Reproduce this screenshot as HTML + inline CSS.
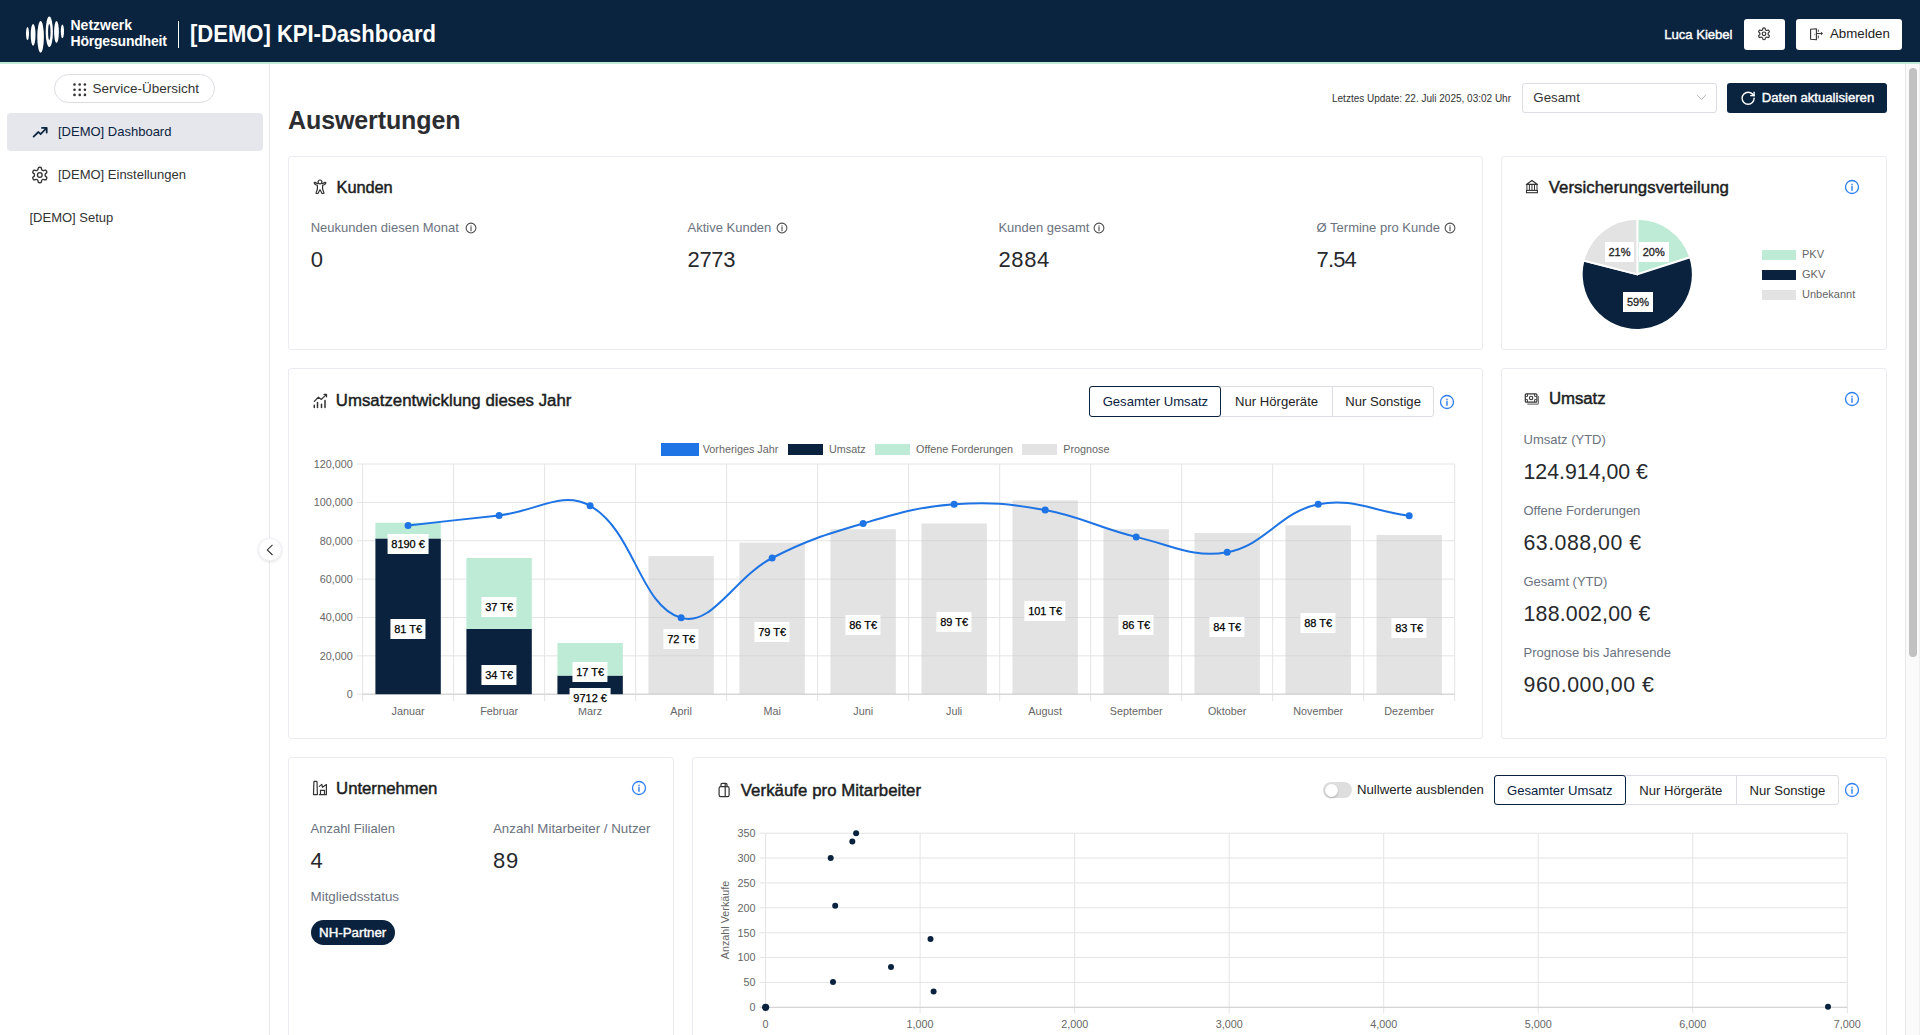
<!DOCTYPE html><html><head><meta charset="utf-8"><title>KPI-Dashboard</title>
<style>
html,body{margin:0;padding:0;width:1920px;height:1035px;overflow:hidden;background:#fff;font-family:"Liberation Sans", sans-serif;}
.t{position:absolute;white-space:nowrap;}
.card{position:absolute;border:1px solid #ebebf2;border-radius:3px;background:#fff;box-sizing:border-box;}
</style></head><body>

<div style="position:absolute;left:0px;top:0px;width:1920px;height:62px;background:#0a233e;"></div>
<div style="position:absolute;left:0px;top:62px;width:1920px;height:2px;background:#bfead6;"></div>
<svg style="position:absolute;left:0px;top:0px;overflow:visible;" width="80" height="62" viewBox="0 0 80 62"><ellipse cx="27.5" cy="33.6" rx="1.5" ry="6.5" fill="#fff"/><ellipse cx="33.1" cy="34.8" rx="2.4" ry="10.9" fill="#fff"/><ellipse cx="40.6" cy="36.9" rx="3.3" ry="15.8" fill="#fff"/><ellipse cx="49.3" cy="31.8" rx="3.6" ry="15.3" fill="#fff"/><ellipse cx="56.5" cy="32" rx="2.4" ry="10.9" fill="#fff"/><ellipse cx="62.4" cy="31.3" rx="1.6" ry="6.9" fill="#fff"/><ellipse cx="49.3" cy="32" rx="1.2" ry="8" fill="#0a233e"/></svg>
<div class="t " style="left:70.5px;top:16.98px;font-size:14px;line-height:16.8px;color:#fff;font-weight:bold;letter-spacing:0px;">Netzwerk</div>
<div class="t " style="left:70.5px;top:33.19px;font-size:14px;line-height:16.8px;color:#fff;font-weight:bold;letter-spacing:-0.2px;">Hörgesundheit</div>
<div style="position:absolute;left:178px;top:21px;width:1px;height:27px;background:#fff;"></div>
<div class="t " style="left:189.8px;transform: scaleX(0.918);transform-origin:0 0;top:19.66px;font-size:24px;line-height:28.8px;color:#fff;font-weight:bold;">[DEMO] KPI-Dashboard</div>
<div class="t " style="right:187.5px;top:26.94px;font-size:13.2px;line-height:15.84px;color:#fff;font-weight:normal;letter-spacing:-0.05px;-webkit-text-stroke:0.4px #fff;">Luca Kiebel</div>
<div style="position:absolute;left:1744px;top:19px;width:41px;height:31px;background:#fff;border-radius:3px;"></div>
<svg style="position:absolute;left:0;top:0;overflow:visible" width="1" height="1"><g transform="translate(1756.90 26.70) scale(0.5917)" fill="none" stroke="#333" stroke-width="2.0" stroke-linecap="round" stroke-linejoin="round"><path d="M12.22 2h-.44a2 2 0 0 0-2 2v.18a2 2 0 0 1-1 1.73l-.43.25a2 2 0 0 1-2 0l-.15-.08a2 2 0 0 0-2.73.73l-.22.38a2 2 0 0 0 .73 2.73l.15.1a2 2 0 0 1 1 1.72v.51a2 2 0 0 1-1 1.74l-.15.09a2 2 0 0 0-.73 2.73l.22.38a2 2 0 0 0 2.73.73l.15-.08a2 2 0 0 1 2 0l.43.25a2 2 0 0 1 1 1.73V20a2 2 0 0 0 2 2h.44a2 2 0 0 0 2-2v-.18a2 2 0 0 1 1-1.73l.43-.25a2 2 0 0 1 2 0l.15.08a2 2 0 0 0 2.73-.73l.22-.39a2 2 0 0 0-.73-2.73l-.15-.08a2 2 0 0 1-1-1.74v-.5a2 2 0 0 1 1-1.74l.15-.09a2 2 0 0 0 .73-2.73l-.22-.38a2 2 0 0 0-2.73-.73l-.15.08a2 2 0 0 1-2 0l-.43-.25a2 2 0 0 1-1-1.73V4a2 2 0 0 0-2-2z"/><circle cx="12" cy="12" r="3"/></g></svg>
<div style="position:absolute;left:1796px;top:19px;width:106px;height:31px;background:#fff;border-radius:3px;"></div>
<svg style="position:absolute;left:1800px;top:20px;overflow:visible;" width="30" height="30" viewBox="0 0 30 30"><path d="M10.6 9.3 L16.4 8.7 V19.7 L10.6 19.3 Z" fill="none" stroke="#333" stroke-width="1.1" stroke-linejoin="round"/><path d="M16.6 13.5 H21.5" stroke="#333" stroke-width="1.1"/><path d="M21 11.8 L23 13.5 L21 15.2 Z" fill="#333"/><path d="M18.3 9.6 V11.8 M18.3 15.4 V18.4" stroke="#333" stroke-width="0.9"/><circle cx="14.8" cy="14.2" r="0.5" fill="#333"/></svg>
<div class="t " style="left:1830px;top:26.39px;font-size:13.3px;line-height:15.96px;color:#222;font-weight:normal;">Abmelden</div>
<div style="position:absolute;left:269px;top:64px;width:1px;height:971px;background:#e8e8f0;"></div>
<div style="position:absolute;left:54px;top:74px;width:161px;height:29px;border:1px solid #dcdce4;border-radius:15px;box-sizing:border-box;"></div>
<svg style="position:absolute;left:73px;top:83px;overflow:visible;" width="13" height="13" viewBox="0 0 13 13"><circle cx="1.5" cy="1.5" r="1.3" fill="#333"/><circle cx="1.5" cy="6.7" r="1.3" fill="#333"/><circle cx="1.5" cy="11.9" r="1.3" fill="#333"/><circle cx="6.7" cy="1.5" r="1.3" fill="#333"/><circle cx="6.7" cy="6.7" r="1.3" fill="#333"/><circle cx="6.7" cy="11.9" r="1.3" fill="#333"/><circle cx="11.9" cy="1.5" r="1.3" fill="#333"/><circle cx="11.9" cy="6.7" r="1.3" fill="#333"/><circle cx="11.9" cy="11.9" r="1.3" fill="#333"/></svg>
<div class="t " style="left:92.5px;top:80.77px;font-size:13.5px;line-height:16.2px;color:#333;font-weight:normal;">Service-Übersicht</div>
<div style="position:absolute;left:7px;top:113px;width:256px;height:38px;background:#e6e7ec;border-radius:4px;"></div>
<svg style="position:absolute;left:26px;top:120px;overflow:visible;" width="28" height="22" viewBox="0 0 28 22"><path d="M7.6 16.6 L12.4 12 L14.6 14.2 L20.6 8 M16 7.9 H20.7 V12.6" fill="none" stroke="#0a233e" stroke-width="1.75" stroke-linecap="round" stroke-linejoin="round"/></svg>
<div class="t " style="left:58px;top:124.06px;font-size:13px;line-height:15.6px;color:#0a233e;font-weight:normal;">[DEMO] Dashboard</div>
<svg style="position:absolute;left:0;top:0;overflow:visible" width="1" height="1"><g transform="translate(30.45 165.65) scale(0.7792)" fill="none" stroke="#333" stroke-width="1.75" stroke-linecap="round" stroke-linejoin="round"><path d="M12.22 2h-.44a2 2 0 0 0-2 2v.18a2 2 0 0 1-1 1.73l-.43.25a2 2 0 0 1-2 0l-.15-.08a2 2 0 0 0-2.73.73l-.22.38a2 2 0 0 0 .73 2.73l.15.1a2 2 0 0 1 1 1.72v.51a2 2 0 0 1-1 1.74l-.15.09a2 2 0 0 0-.73 2.73l.22.38a2 2 0 0 0 2.73.73l.15-.08a2 2 0 0 1 2 0l.43.25a2 2 0 0 1 1 1.73V20a2 2 0 0 0 2 2h.44a2 2 0 0 0 2-2v-.18a2 2 0 0 1 1-1.73l.43-.25a2 2 0 0 1 2 0l.15.08a2 2 0 0 0 2.73-.73l.22-.39a2 2 0 0 0-.73-2.73l-.15-.08a2 2 0 0 1-1-1.74v-.5a2 2 0 0 1 1-1.74l.15-.09a2 2 0 0 0 .73-2.73l-.22-.38a2 2 0 0 0-2.73-.73l-.15.08a2 2 0 0 1-2 0l-.43-.25a2 2 0 0 1-1-1.73V4a2 2 0 0 0-2-2z"/><circle cx="12" cy="12" r="3"/></g></svg>
<div class="t " style="left:58px;top:167.06px;font-size:13px;line-height:15.6px;color:#333;font-weight:normal;">[DEMO] Einstellungen</div>
<div class="t " style="left:29.5px;top:210.06px;font-size:13px;line-height:15.6px;color:#333;font-weight:normal;">[DEMO] Setup</div>
<div style="position:absolute;left:258.3px;top:537.6px;width:23.5px;height:23.5px;background:#fff;border-radius:50%;box-shadow:0 1px 3px rgba(0,0,0,0.10);border:1px solid #efeff5;box-sizing:border-box;"></div>
<svg style="position:absolute;left:260px;top:540px;overflow:visible;" width="20" height="20" viewBox="0 0 20 20"><path d="M12.5 4.9 L7.3 9.9 L12.5 15" fill="none" stroke="#333" stroke-width="1.1"/></svg>
<div style="position:absolute;left:1905px;top:64px;width:15px;height:971px;background:#fafafa;border-left:1px solid #e8e8e8;border-right:1px solid #f0f0f0;box-sizing:border-box;"></div>
<div style="position:absolute;left:1909px;top:68px;width:8px;height:589px;background:#c1c1c1;border-radius:4px;"></div>
<div class="t " style="left:288px;top:105.19px;font-size:25px;line-height:30.0px;color:#2b2d31;font-weight:bold;letter-spacing:-0.1px;">Auswertungen</div>
<div class="t " style="right:409px;top:92.78px;font-size:10px;line-height:12.0px;color:#333;font-weight:normal;">Letztes Update: 22. Juli 2025, 03:02 Uhr</div>
<div style="position:absolute;left:1522px;top:83px;width:195px;height:30px;border:1px solid #dcdce4;border-radius:3px;box-sizing:border-box;background:#fff;"></div>
<div class="t " style="left:1533.3px;top:89.89px;font-size:13.3px;line-height:15.96px;color:#333;font-weight:normal;">Gesamt</div>
<svg style="position:absolute;left:1690px;top:85px;overflow:visible;" width="24" height="20" viewBox="0 0 24 20"><path d="M7.1 10 L11.5 14.6 L15.8 10" fill="none" stroke="#b8b8be" stroke-width="1"/></svg>
<div style="position:absolute;left:1727px;top:83px;width:160px;height:30px;background:#0a233e;border-radius:3px;"></div>
<svg style="position:absolute;left:0;top:0;overflow:visible" width="1" height="1"><g transform="translate(1740.10 90.30) scale(0.6667)" fill="none" stroke="#fff" stroke-width="2.1" stroke-linecap="round" stroke-linejoin="round"><path d="M21 12a9 9 0 1 1-9-9c2.52 0 4.93 1 6.74 2.74L21 8"/><path d="M21 3v5h-5"/></g></svg>
<div class="t " style="left:1761.7px;top:89.94px;font-size:13.2px;line-height:15.84px;color:#fff;font-weight:normal;letter-spacing:-0.02px;-webkit-text-stroke:0.4px #fff;">Daten aktualisieren</div>
<div class="card" style="left:288px;top:156px;width:1195px;height:194px;"></div>
<svg style="position:absolute;left:308px;top:176px;overflow:visible;" width="24" height="24" viewBox="0 0 24 24"><circle cx="12" cy="5.9" r="1.9" fill="none" stroke="#333" stroke-width="1.2"/><path d="M10 7.9 L7 6.4 Q6.1 6.1 6.2 7.1 Q6.4 8.2 9.4 9.5 V13 L8.1 16.9 Q7.9 17.5 8.6 17.5 H9.5 Q10 17.5 10.2 17 L12 13.7 L13.8 17 Q14 17.5 14.5 17.5 H15.4 Q16.1 17.5 15.9 16.9 L14.6 13 V9.5 Q17.6 8.2 17.8 7.1 Q17.9 6.1 17 6.4 L14 7.9" fill="none" stroke="#333" stroke-width="1.2" stroke-linejoin="round"/></svg>
<div class="t " style="left:336.6px;top:177.61px;font-size:16.4px;line-height:19.68px;color:#1b1d21;font-weight:normal;letter-spacing:-0.1px;-webkit-text-stroke:0.45px #1b1d21;">Kunden</div>
<div class="t " style="left:310.7px;top:220.06px;font-size:13px;line-height:15.6px;color:#6b7280;font-weight:normal;">Neukunden diesen Monat</div>
<svg style="position:absolute;left:465.2px;top:221.5px;overflow:visible;" width="12" height="12" viewBox="0 0 12 12"><circle cx="6" cy="6" r="4.9" fill="none" stroke="#4a4a4a" stroke-width="1.05"/><circle cx="6" cy="3.9" r="0.65" fill="#4a4a4a"/><path d="M6 5.4 V8.7" stroke="#4a4a4a" stroke-width="1.1" stroke-linecap="round"/></svg>
<div class="t " style="left:310.7px;top:246.91px;font-size:22px;line-height:26.4px;color:#27292d;font-weight:normal;letter-spacing:0px;">0</div>
<div class="t " style="left:687.5px;top:220.06px;font-size:13px;line-height:15.6px;color:#6b7280;font-weight:normal;">Aktive Kunden</div>
<svg style="position:absolute;left:775.5px;top:221.5px;overflow:visible;" width="12" height="12" viewBox="0 0 12 12"><circle cx="6" cy="6" r="4.9" fill="none" stroke="#4a4a4a" stroke-width="1.05"/><circle cx="6" cy="3.9" r="0.65" fill="#4a4a4a"/><path d="M6 5.4 V8.7" stroke="#4a4a4a" stroke-width="1.1" stroke-linecap="round"/></svg>
<div class="t " style="left:687.5px;top:246.91px;font-size:22px;line-height:26.4px;color:#27292d;font-weight:normal;letter-spacing:-0.35px;">2773</div>
<div class="t " style="left:998.4px;top:220.06px;font-size:13px;line-height:15.6px;color:#6b7280;font-weight:normal;">Kunden gesamt</div>
<svg style="position:absolute;left:1093px;top:221.5px;overflow:visible;" width="12" height="12" viewBox="0 0 12 12"><circle cx="6" cy="6" r="4.9" fill="none" stroke="#4a4a4a" stroke-width="1.05"/><circle cx="6" cy="3.9" r="0.65" fill="#4a4a4a"/><path d="M6 5.4 V8.7" stroke="#4a4a4a" stroke-width="1.1" stroke-linecap="round"/></svg>
<div class="t " style="left:998.4px;top:246.91px;font-size:22px;line-height:26.4px;color:#27292d;font-weight:normal;letter-spacing:0.65px;">2884</div>
<div class="t " style="left:1316.6px;top:220.06px;font-size:13px;line-height:15.6px;color:#6b7280;font-weight:normal;">Ø Termine pro Kunde</div>
<svg style="position:absolute;left:1444px;top:221.5px;overflow:visible;" width="12" height="12" viewBox="0 0 12 12"><circle cx="6" cy="6" r="4.9" fill="none" stroke="#4a4a4a" stroke-width="1.05"/><circle cx="6" cy="3.9" r="0.65" fill="#4a4a4a"/><path d="M6 5.4 V8.7" stroke="#4a4a4a" stroke-width="1.1" stroke-linecap="round"/></svg>
<div class="t " style="left:1316.6px;top:246.91px;font-size:22px;line-height:26.4px;color:#27292d;font-weight:normal;letter-spacing:-0.9px;">7.54</div>
<div class="card" style="left:1501px;top:156px;width:386px;height:194px;"></div>
<svg style="position:absolute;left:1518px;top:176px;overflow:visible;" width="24" height="24" viewBox="0 0 24 24"><path d="M8.4 8.4 L13.95 4.4 L19.5 8.4 Z" fill="none" stroke="#333" stroke-width="1.2" stroke-linejoin="round"/><path d="M8.9 8.4 V14.3 M11.4 8.4 V14.3 M13.95 8.4 V14.3 M16.5 8.4 V14.3 M19 8.4 V14.3" stroke="#333" stroke-width="1"/><rect x="8.5" y="14.4" width="10.9" height="2.3" fill="none" stroke="#333" stroke-width="1.1"/></svg>
<div class="t " style="left:1548.7px;top:177.68px;font-size:16.8px;line-height:20.16px;color:#1b1d21;font-weight:normal;letter-spacing:0.05px;-webkit-text-stroke:0.45px #1b1d21;">Versicherungsverteilung</div>
<svg style="position:absolute;left:1843.7px;top:179px;overflow:visible;" width="16" height="16" viewBox="0 0 16 16"><circle cx="8" cy="8" r="6.5" fill="none" stroke="#2f7ff0" stroke-width="1.3"/><path d="M8 5.2 V5.7 M8 7.4 V11.3" stroke="#2f7ff0" stroke-width="1.4" stroke-linecap="round"/></svg>
<svg style="position:absolute;left:1500px;top:200px;overflow:visible;" width="300" height="150" viewBox="0 0 300 150"><path d="M137.29999999999995 74.39999999999998 L137.30 18.80 A55.6 55.6 0 0 1 190.18 57.22 Z" fill="#bdebd6" stroke="#fff" stroke-width="2" stroke-linejoin="round"/><path d="M137.29999999999995 74.39999999999998 L190.18 57.22 A55.6 55.6 0 1 1 83.45 60.57 Z" fill="#0a223e" stroke="#fff" stroke-width="2" stroke-linejoin="round"/><path d="M137.29999999999995 74.39999999999998 L83.45 60.57 A55.6 55.6 0 0 1 137.30 18.80 Z" fill="#e3e3e3" stroke="#fff" stroke-width="2" stroke-linejoin="round"/></svg>
<div style="position:absolute;left:1605px;top:242.3px;width:29px;height:19.7px;background:#fff;"></div>
<div class="t " style="left:1619.5px;transform:translateX(-50%);transform-origin:50% 0;top:246.15px;font-size:11px;line-height:13.2px;color:#222;font-weight:normal;-webkit-text-stroke:0.3px #222;">21%</div>
<div style="position:absolute;left:1639px;top:242.3px;width:29.5px;height:19.7px;background:#fff;"></div>
<div class="t " style="left:1653.75px;transform:translateX(-50%);transform-origin:50% 0;top:246.15px;font-size:11px;line-height:13.2px;color:#222;font-weight:normal;-webkit-text-stroke:0.3px #222;">20%</div>
<div style="position:absolute;left:1623px;top:291.8px;width:30px;height:19.9px;background:#fff;"></div>
<div class="t " style="left:1638.0px;transform:translateX(-50%);transform-origin:50% 0;top:295.75px;font-size:11px;line-height:13.2px;color:#222;font-weight:normal;-webkit-text-stroke:0.3px #222;">59%</div>
<div style="position:absolute;left:1761.5px;top:249.7px;width:34px;height:10px;background:#bdebd6;"></div>
<div class="t " style="left:1802px;top:248.40px;font-size:11px;line-height:13.2px;color:#666;font-weight:normal;">PKV</div>
<div style="position:absolute;left:1761.5px;top:269.59999999999997px;width:34px;height:10px;background:#0a223e;"></div>
<div class="t " style="left:1802px;top:268.30px;font-size:11px;line-height:13.2px;color:#666;font-weight:normal;">GKV</div>
<div style="position:absolute;left:1761.5px;top:289.5px;width:34px;height:10px;background:#e3e3e3;"></div>
<div class="t " style="left:1802px;top:288.20px;font-size:11px;line-height:13.2px;color:#666;font-weight:normal;">Unbekannt</div>
<div class="card" style="left:1501px;top:368px;width:386px;height:371px;"></div>
<svg style="position:absolute;left:1518px;top:388px;overflow:visible;" width="24" height="24" viewBox="0 0 24 24"><rect x="7.3" y="5.8" width="11.6" height="8.4" rx="1" fill="none" stroke="#333" stroke-width="1.2"/><circle cx="13.1" cy="10" r="1.7" fill="none" stroke="#333" stroke-width="1.1"/><path d="M7.6 8.4 H9.5 V6 M16.6 6 V8.4 H18.6 M7.6 11.6 H9.5 V14 M16.6 14 V11.6 H18.6" fill="none" stroke="#333" stroke-width="0.9"/><path d="M20.4 8 V15.3 A0.8 0.8 0 0 1 19.6 16.1 H9.3" fill="none" stroke="#777" stroke-width="1.2"/></svg>
<div class="t " style="left:1549px;top:389.38px;font-size:16.8px;line-height:20.16px;color:#1b1d21;font-weight:normal;letter-spacing:-0.05px;-webkit-text-stroke:0.45px #1b1d21;">Umsatz</div>
<svg style="position:absolute;left:1843.9px;top:391px;overflow:visible;" width="16" height="16" viewBox="0 0 16 16"><circle cx="8" cy="8" r="6.5" fill="none" stroke="#2f7ff0" stroke-width="1.3"/><path d="M8 5.2 V5.7 M8 7.4 V11.3" stroke="#2f7ff0" stroke-width="1.4" stroke-linecap="round"/></svg>
<div class="t " style="left:1523.5px;top:432.06px;font-size:13px;line-height:15.6px;color:#6b7280;font-weight:normal;">Umsatz (YTD)</div>
<div class="t " style="left:1523.5px;top:459.61px;font-size:21.3px;line-height:25.56px;color:#27292d;font-weight:normal;letter-spacing:0px;">124.914,00 €</div>
<div class="t " style="left:1523.5px;top:503.16px;font-size:13px;line-height:15.6px;color:#6b7280;font-weight:normal;">Offene Forderungen</div>
<div class="t " style="left:1523.5px;top:530.71px;font-size:21.3px;line-height:25.56px;color:#27292d;font-weight:normal;letter-spacing:0.5px;">63.088,00 €</div>
<div class="t " style="left:1523.5px;top:574.26px;font-size:13px;line-height:15.6px;color:#6b7280;font-weight:normal;">Gesamt (YTD)</div>
<div class="t " style="left:1523.5px;top:601.81px;font-size:21.3px;line-height:25.56px;color:#27292d;font-weight:normal;letter-spacing:0.22px;">188.002,00 €</div>
<div class="t " style="left:1523.5px;top:645.36px;font-size:13px;line-height:15.6px;color:#6b7280;font-weight:normal;">Prognose bis Jahresende</div>
<div class="t " style="left:1523.5px;top:672.91px;font-size:21.3px;line-height:25.56px;color:#27292d;font-weight:normal;letter-spacing:0.55px;">960.000,00 €</div>
<div class="card" style="left:288px;top:757px;width:386px;height:300px;"></div>
<svg style="position:absolute;left:308px;top:776px;overflow:visible;" width="24" height="24" viewBox="0 0 24 24"><path d="M5.5 18.6 L5.9 6 Q5.9 5.3 6.6 5.3 H8.3 Q9 5.3 9 6 L9.4 18.6 Z" fill="none" stroke="#333" stroke-width="1.2" stroke-linejoin="round"/><path d="M11.3 10.4 L13.8 8.4 L14.5 11.3 L18.4 8.6 V18.6 H11.3" fill="none" stroke="#333" stroke-width="1.2" stroke-linejoin="round" stroke-linecap="round"/><path d="M12.5 18.6 V14.4 H16.5 V18.6" fill="none" stroke="#333" stroke-width="1.2"/></svg>
<div class="t " style="left:336.1px;top:778.88px;font-size:16.8px;line-height:20.16px;color:#1b1d21;font-weight:normal;letter-spacing:-0.05px;-webkit-text-stroke:0.45px #1b1d21;">Unternehmen</div>
<svg style="position:absolute;left:631px;top:780.4px;overflow:visible;" width="16" height="16" viewBox="0 0 16 16"><circle cx="8" cy="8" r="6.5" fill="none" stroke="#2f7ff0" stroke-width="1.3"/><path d="M8 5.2 V5.7 M8 7.4 V11.3" stroke="#2f7ff0" stroke-width="1.4" stroke-linecap="round"/></svg>
<div class="t " style="left:310.5px;top:820.86px;font-size:13px;line-height:15.6px;color:#6b7280;font-weight:normal;">Anzahl Filialen</div>
<div class="t " style="left:493px;top:820.69px;font-size:13.3px;line-height:15.96px;color:#6b7280;font-weight:normal;">Anzahl Mitarbeiter / Nutzer</div>
<div class="t " style="left:310.5px;top:847.90px;font-size:22px;line-height:26.4px;color:#27292d;font-weight:normal;">4</div>
<div class="t " style="left:493px;top:847.90px;font-size:22px;line-height:26.4px;color:#27292d;font-weight:normal;letter-spacing:0.8px;">89</div>
<div class="t " style="left:310.5px;top:888.83px;font-size:13.4px;line-height:16.08px;color:#6b7280;font-weight:normal;">Mitgliedsstatus</div>
<div style="position:absolute;left:311px;top:920px;width:84px;height:25px;background:#0a223e;border-radius:13px;"></div>
<div class="t " style="left:352.7px;transform:translateX(-50%);transform-origin:50% 0;top:924.89px;font-size:13.3px;line-height:15.96px;color:#fff;font-weight:normal;-webkit-text-stroke:0.4px #fff;">NH-Partner</div>
<div class="card" style="left:288px;top:368px;width:1195px;height:371px;"></div>
<svg style="position:absolute;left:308px;top:388px;overflow:visible;" width="24" height="24" viewBox="0 0 24 24"><path d="M6.3 17.2 V19.4 M9.5 14.5 V19.4 M13.5 16.2 V19.4 M17 12.5 V19.4" stroke="#333" stroke-width="1.5" stroke-linecap="round"/><path d="M6.3 13.4 L10.4 9.2 L13.4 11.4 L18.2 6.6 M16 6.3 H18.5 V8.8" fill="none" stroke="#333" stroke-width="1.3" stroke-linecap="round" stroke-linejoin="round"/></svg>
<div class="t " style="left:335.8px;top:391.38px;font-size:16.8px;line-height:20.16px;color:#1b1d21;font-weight:normal;letter-spacing:0.02px;-webkit-text-stroke:0.45px #1b1d21;">Umsatzentwicklung dieses Jahr</div>
<div style="position:absolute;left:1089.3px;top:386.4px;width:345.20000000000005px;height:30.200000000000045px;border:1px solid #dcdce4;border-radius:3px;box-sizing:border-box;"></div>
<div style="position:absolute;left:1089.3px;top:386.4px;width:132.20000000000005px;height:30.200000000000045px;border:1.5px solid #0a223e;border-radius:3px;box-sizing:border-box;"></div>
<div style="position:absolute;left:1331.7px;top:386.4px;width:1px;height:30.200000000000045px;background:#dcdce4;"></div>
<div class="t " style="left:1155.4px;transform:translateX(-50%);transform-origin:50% 0;top:394.00px;font-size:13.1px;line-height:15.72px;color:#0a223e;font-weight:normal;">Gesamter Umsatz</div>
<div class="t " style="left:1276.6px;transform:translateX(-50%);transform-origin:50% 0;top:394.00px;font-size:13.1px;line-height:15.72px;color:#222;font-weight:normal;">Nur Hörgeräte</div>
<div class="t " style="left:1383.1px;transform:translateX(-50%);transform-origin:50% 0;top:394.00px;font-size:13.1px;line-height:15.72px;color:#222;font-weight:normal;">Nur Sonstige</div>
<svg style="position:absolute;left:1438.6px;top:393.5px;overflow:visible;" width="16" height="16" viewBox="0 0 16 16"><circle cx="8" cy="8" r="6.5" fill="none" stroke="#2f7ff0" stroke-width="1.3"/><path d="M8 5.2 V5.7 M8 7.4 V11.3" stroke="#2f7ff0" stroke-width="1.4" stroke-linecap="round"/></svg>
<svg style="position:absolute;left:300px;top:430px;overflow:visible;" width="1200" height="300" viewBox="0 0 1200 300"><path d="M56.6 264.20 H1154.7" stroke="#e4e4e4" stroke-width="1"/><path d="M56.6 225.83 H1154.7" stroke="#e4e4e4" stroke-width="1"/><path d="M56.6 187.47 H1154.7" stroke="#e4e4e4" stroke-width="1"/><path d="M56.6 149.10 H1154.7" stroke="#e4e4e4" stroke-width="1"/><path d="M56.6 110.73 H1154.7" stroke="#e4e4e4" stroke-width="1"/><path d="M56.6 72.37 H1154.7" stroke="#e4e4e4" stroke-width="1"/><path d="M56.6 34.00 H1154.7" stroke="#e4e4e4" stroke-width="1"/><path d="M62.60 34.0 V271.2" stroke="#e4e4e4" stroke-width="1"/><path d="M153.61 34.0 V271.2" stroke="#e4e4e4" stroke-width="1"/><path d="M244.62 34.0 V271.2" stroke="#e4e4e4" stroke-width="1"/><path d="M335.62 34.0 V271.2" stroke="#e4e4e4" stroke-width="1"/><path d="M426.63 34.0 V271.2" stroke="#e4e4e4" stroke-width="1"/><path d="M517.64 34.0 V271.2" stroke="#e4e4e4" stroke-width="1"/><path d="M608.65 34.0 V271.2" stroke="#e4e4e4" stroke-width="1"/><path d="M699.66 34.0 V271.2" stroke="#e4e4e4" stroke-width="1"/><path d="M790.67 34.0 V271.2" stroke="#e4e4e4" stroke-width="1"/><path d="M881.67 34.0 V271.2" stroke="#e4e4e4" stroke-width="1"/><path d="M972.68 34.0 V271.2" stroke="#e4e4e4" stroke-width="1"/><path d="M1063.69 34.0 V271.2" stroke="#e4e4e4" stroke-width="1"/><path d="M1154.70 34.0 V271.2" stroke="#e4e4e4" stroke-width="1"/><path d="M62.6 264.20 H1154.7" stroke="#d0d0d0" stroke-width="1"/><rect x="75.40" y="108.45" width="65.4" height="155.75" fill="#0a223e"/><rect x="75.40" y="92.74" width="65.4" height="15.71" fill="#bdebd6"/><rect x="166.41" y="198.98" width="65.4" height="65.22" fill="#0a223e"/><rect x="166.41" y="128.00" width="65.4" height="70.98" fill="#bdebd6"/><rect x="257.42" y="245.57" width="65.4" height="18.63" fill="#0a223e"/><rect x="257.42" y="212.96" width="65.4" height="32.61" fill="#bdebd6"/><rect x="348.43" y="126.08" width="65.4" height="138.12" fill="rgba(200,200,200,0.5)"/><rect x="439.44" y="112.65" width="65.4" height="151.55" fill="rgba(200,200,200,0.5)"/><rect x="530.45" y="99.22" width="65.4" height="164.98" fill="rgba(200,200,200,0.5)"/><rect x="621.45" y="93.47" width="65.4" height="170.73" fill="rgba(200,200,200,0.5)"/><rect x="712.46" y="70.45" width="65.4" height="193.75" fill="rgba(200,200,200,0.5)"/><rect x="803.47" y="99.22" width="65.4" height="164.98" fill="rgba(200,200,200,0.5)"/><rect x="894.48" y="103.06" width="65.4" height="161.14" fill="rgba(200,200,200,0.5)"/><rect x="985.49" y="95.39" width="65.4" height="168.81" fill="rgba(200,200,200,0.5)"/><rect x="1076.50" y="104.98" width="65.4" height="159.22" fill="rgba(200,200,200,0.5)"/><path d="M108.10 95.39 C144.51 91.40 162.70 89.33 199.11 85.41 C235.51 81.50 261.87 59.92 290.12 75.82 C334.68 100.90 339.64 175.96 381.13 187.85 C412.44 196.83 433.69 147.94 472.14 128.00 C506.50 110.18 525.91 104.46 563.15 93.47 C598.72 82.97 617.39 77.00 654.15 74.29 C690.20 71.63 709.48 73.65 745.16 80.04 C782.29 86.69 799.26 98.34 836.17 106.90 C872.07 115.22 892.75 128.41 927.18 122.24 C965.56 115.37 979.70 81.99 1018.19 74.29 C1052.51 67.41 1072.79 81.19 1109.20 85.80" fill="none" stroke="#1e74e4" stroke-width="2"/><circle cx="108.10" cy="95.39" r="3.5" fill="#1e74e4"/><circle cx="199.11" cy="85.41" r="3.5" fill="#1e74e4"/><circle cx="290.12" cy="75.82" r="3.5" fill="#1e74e4"/><circle cx="381.13" cy="187.85" r="3.5" fill="#1e74e4"/><circle cx="472.14" cy="128.00" r="3.5" fill="#1e74e4"/><circle cx="563.15" cy="93.47" r="3.5" fill="#1e74e4"/><circle cx="654.15" cy="74.29" r="3.5" fill="#1e74e4"/><circle cx="745.16" cy="80.04" r="3.5" fill="#1e74e4"/><circle cx="836.17" cy="106.90" r="3.5" fill="#1e74e4"/><circle cx="927.18" cy="122.24" r="3.5" fill="#1e74e4"/><circle cx="1018.19" cy="74.29" r="3.5" fill="#1e74e4"/><circle cx="1109.20" cy="85.80" r="3.5" fill="#1e74e4"/></svg>
<div class="t " style="right:1567.3px;top:688.02px;font-size:10.8px;line-height:12.96px;color:#666;font-weight:normal;">0</div>
<div class="t " style="right:1567.3px;top:649.65px;font-size:10.8px;line-height:12.96px;color:#666;font-weight:normal;">20,000</div>
<div class="t " style="right:1567.3px;top:611.28px;font-size:10.8px;line-height:12.96px;color:#666;font-weight:normal;">40,000</div>
<div class="t " style="right:1567.3px;top:572.92px;font-size:10.8px;line-height:12.96px;color:#666;font-weight:normal;">60,000</div>
<div class="t " style="right:1567.3px;top:534.55px;font-size:10.8px;line-height:12.96px;color:#666;font-weight:normal;">80,000</div>
<div class="t " style="right:1567.3px;top:496.18px;font-size:10.8px;line-height:12.96px;color:#666;font-weight:normal;">100,000</div>
<div class="t " style="right:1567.3px;top:457.82px;font-size:10.8px;line-height:12.96px;color:#666;font-weight:normal;">120,000</div>
<div class="t " style="left:408.1041666666667px;transform:translateX(-50%);transform-origin:50% 0;top:704.52px;font-size:10.8px;line-height:12.96px;color:#666;font-weight:normal;">Januar</div>
<div class="t " style="left:499.1125px;transform:translateX(-50%);transform-origin:50% 0;top:704.52px;font-size:10.8px;line-height:12.96px;color:#666;font-weight:normal;">Februar</div>
<div class="t " style="left:590.1208333333334px;transform:translateX(-50%);transform-origin:50% 0;top:704.52px;font-size:10.8px;line-height:12.96px;color:#666;font-weight:normal;">März</div>
<div class="t " style="left:681.1291666666666px;transform:translateX(-50%);transform-origin:50% 0;top:704.52px;font-size:10.8px;line-height:12.96px;color:#666;font-weight:normal;">April</div>
<div class="t " style="left:772.1375px;transform:translateX(-50%);transform-origin:50% 0;top:704.52px;font-size:10.8px;line-height:12.96px;color:#666;font-weight:normal;">Mai</div>
<div class="t " style="left:863.1458333333333px;transform:translateX(-50%);transform-origin:50% 0;top:704.52px;font-size:10.8px;line-height:12.96px;color:#666;font-weight:normal;">Juni</div>
<div class="t " style="left:954.1541666666666px;transform:translateX(-50%);transform-origin:50% 0;top:704.52px;font-size:10.8px;line-height:12.96px;color:#666;font-weight:normal;">Juli</div>
<div class="t " style="left:1045.1625px;transform:translateX(-50%);transform-origin:50% 0;top:704.52px;font-size:10.8px;line-height:12.96px;color:#666;font-weight:normal;">August</div>
<div class="t " style="left:1136.1708333333331px;transform:translateX(-50%);transform-origin:50% 0;top:704.52px;font-size:10.8px;line-height:12.96px;color:#666;font-weight:normal;">September</div>
<div class="t " style="left:1227.1791666666668px;transform:translateX(-50%);transform-origin:50% 0;top:704.52px;font-size:10.8px;line-height:12.96px;color:#666;font-weight:normal;">Oktober</div>
<div class="t " style="left:1318.1875px;transform:translateX(-50%);transform-origin:50% 0;top:704.52px;font-size:10.8px;line-height:12.96px;color:#666;font-weight:normal;">November</div>
<div class="t " style="left:1409.1958333333332px;transform:translateX(-50%);transform-origin:50% 0;top:704.52px;font-size:10.8px;line-height:12.96px;color:#666;font-weight:normal;">Dezember</div>
<div class="t" style="left:408.10px;top:533.50px;height:20px;line-height:20px;transform:translateX(-50%);background:#fff;padding:0 3.6px;font-size:11px;color:#000;-webkit-text-stroke:0.25px #000;">8190 €</div>
<div class="t" style="left:408.10px;top:619.00px;height:20px;line-height:20px;transform:translateX(-50%);background:#fff;padding:0 3.6px;font-size:11px;color:#000;-webkit-text-stroke:0.25px #000;">81 T€</div>
<div class="t" style="left:499.11px;top:597.00px;height:20px;line-height:20px;transform:translateX(-50%);background:#fff;padding:0 3.6px;font-size:11px;color:#000;-webkit-text-stroke:0.25px #000;">37 T€</div>
<div class="t" style="left:499.11px;top:665.00px;height:20px;line-height:20px;transform:translateX(-50%);background:#fff;padding:0 3.6px;font-size:11px;color:#000;-webkit-text-stroke:0.25px #000;">34 T€</div>
<div class="t" style="left:590.12px;top:662.00px;height:20px;line-height:20px;transform:translateX(-50%);background:#fff;padding:0 3.6px;font-size:11px;color:#000;-webkit-text-stroke:0.25px #000;">17 T€</div>
<div class="t" style="left:590.12px;top:688.00px;height:20px;line-height:20px;transform:translateX(-50%);background:#fff;padding:0 3.6px;font-size:11px;color:#000;-webkit-text-stroke:0.25px #000;">9712 €</div>
<div class="t" style="left:681.13px;top:629.00px;height:20px;line-height:20px;transform:translateX(-50%);background:#fff;padding:0 3.6px;font-size:11px;color:#000;-webkit-text-stroke:0.25px #000;">72 T€</div>
<div class="t" style="left:772.14px;top:621.50px;height:20px;line-height:20px;transform:translateX(-50%);background:#fff;padding:0 3.6px;font-size:11px;color:#000;-webkit-text-stroke:0.25px #000;">79 T€</div>
<div class="t" style="left:863.15px;top:615.00px;height:20px;line-height:20px;transform:translateX(-50%);background:#fff;padding:0 3.6px;font-size:11px;color:#000;-webkit-text-stroke:0.25px #000;">86 T€</div>
<div class="t" style="left:954.15px;top:611.70px;height:20px;line-height:20px;transform:translateX(-50%);background:#fff;padding:0 3.6px;font-size:11px;color:#000;-webkit-text-stroke:0.25px #000;">89 T€</div>
<div class="t" style="left:1045.16px;top:600.80px;height:20px;line-height:20px;transform:translateX(-50%);background:#fff;padding:0 3.6px;font-size:11px;color:#000;-webkit-text-stroke:0.25px #000;">101 T€</div>
<div class="t" style="left:1136.17px;top:615.00px;height:20px;line-height:20px;transform:translateX(-50%);background:#fff;padding:0 3.6px;font-size:11px;color:#000;-webkit-text-stroke:0.25px #000;">86 T€</div>
<div class="t" style="left:1227.18px;top:617.00px;height:20px;line-height:20px;transform:translateX(-50%);background:#fff;padding:0 3.6px;font-size:11px;color:#000;-webkit-text-stroke:0.25px #000;">84 T€</div>
<div class="t" style="left:1318.19px;top:612.70px;height:20px;line-height:20px;transform:translateX(-50%);background:#fff;padding:0 3.6px;font-size:11px;color:#000;-webkit-text-stroke:0.25px #000;">88 T€</div>
<div class="t" style="left:1409.20px;top:618.20px;height:20px;line-height:20px;transform:translateX(-50%);background:#fff;padding:0 3.6px;font-size:11px;color:#000;-webkit-text-stroke:0.25px #000;">83 T€</div>
<div style="position:absolute;left:661.2px;top:443px;width:37.5px;height:12.5px;background:#1e74e4;"></div>
<div class="t " style="left:702.7px;top:443.12px;font-size:10.8px;line-height:12.96px;color:#666;font-weight:normal;">Vorheriges Jahr</div>
<div style="position:absolute;left:787.5px;top:444.3px;width:35.7px;height:10.3px;background:#0a223e;"></div>
<div class="t " style="left:829.0px;top:443.12px;font-size:10.8px;line-height:12.96px;color:#666;font-weight:normal;">Umsatz</div>
<div style="position:absolute;left:874.5px;top:444.3px;width:35.7px;height:10.3px;background:#bdebd6;"></div>
<div class="t " style="left:916.0px;top:443.12px;font-size:10.8px;line-height:12.96px;color:#666;font-weight:normal;">Offene Forderungen</div>
<div style="position:absolute;left:1021.8px;top:444.3px;width:35.7px;height:10.3px;background:#e3e3e3;"></div>
<div class="t " style="left:1063.3px;top:443.12px;font-size:10.8px;line-height:12.96px;color:#666;font-weight:normal;">Prognose</div>
<div class="card" style="left:692px;top:757px;width:1195px;height:300px;"></div>
<svg style="position:absolute;left:712px;top:778px;overflow:visible;" width="24" height="24" viewBox="0 0 24 24"><rect x="7.1" y="8.6" width="10" height="10" rx="1.6" fill="none" stroke="#333" stroke-width="1.2"/><path d="M9 8.6 V6.6 Q9 5.3 10.3 5.3 H13.8 Q15 5.3 15 6.6 V8.6 M13.2 5.3 V18.6" fill="none" stroke="#333" stroke-width="1.2"/></svg>
<div class="t " style="left:740.8px;top:780.68px;font-size:16.8px;line-height:20.16px;color:#1b1d21;font-weight:normal;letter-spacing:0.05px;-webkit-text-stroke:0.45px #1b1d21;">Verkäufe pro Mitarbeiter</div>
<div style="position:absolute;left:1323px;top:782px;width:29px;height:16px;background:#dedede;border-radius:8px;"></div>
<div style="position:absolute;left:1324.5px;top:783.5px;width:13px;height:13px;background:#fff;border-radius:50%;box-shadow:0 1px 2px rgba(0,0,0,0.25);"></div>
<div class="t " style="left:1357px;top:782.14px;font-size:13.2px;line-height:15.84px;color:#222;font-weight:normal;">Nullwerte ausblenden</div>
<div style="position:absolute;left:1494px;top:775.2px;width:344.5999999999999px;height:30.299999999999955px;border:1px solid #dcdce4;border-radius:3px;box-sizing:border-box;"></div>
<div style="position:absolute;left:1494px;top:775.2px;width:131.5px;height:30.299999999999955px;border:1.5px solid #0a223e;border-radius:3px;box-sizing:border-box;"></div>
<div style="position:absolute;left:1736.2px;top:775.2px;width:1px;height:30.299999999999955px;background:#dcdce4;"></div>
<div class="t " style="left:1559.75px;transform:translateX(-50%);transform-origin:50% 0;top:782.85px;font-size:13.1px;line-height:15.72px;color:#0a223e;font-weight:normal;">Gesamter Umsatz</div>
<div class="t " style="left:1680.85px;transform:translateX(-50%);transform-origin:50% 0;top:782.85px;font-size:13.1px;line-height:15.72px;color:#222;font-weight:normal;">Nur Hörgeräte</div>
<div class="t " style="left:1787.4px;transform:translateX(-50%);transform-origin:50% 0;top:782.85px;font-size:13.1px;line-height:15.72px;color:#222;font-weight:normal;">Nur Sonstige</div>
<svg style="position:absolute;left:1844px;top:782.35px;overflow:visible;" width="16" height="16" viewBox="0 0 16 16"><circle cx="8" cy="8" r="6.5" fill="none" stroke="#2f7ff0" stroke-width="1.3"/><path d="M8 5.2 V5.7 M8 7.4 V11.3" stroke="#2f7ff0" stroke-width="1.4" stroke-linecap="round"/></svg>
<svg style="position:absolute;left:700px;top:800px;overflow:visible;" width="1200" height="250" viewBox="0 0 1200 250"><path d="M59.6 207.30 H1147.3" stroke="#e4e4e4" stroke-width="1"/><path d="M59.6 182.43 H1147.3" stroke="#e4e4e4" stroke-width="1"/><path d="M59.6 157.56 H1147.3" stroke="#e4e4e4" stroke-width="1"/><path d="M59.6 132.69 H1147.3" stroke="#e4e4e4" stroke-width="1"/><path d="M59.6 107.81 H1147.3" stroke="#e4e4e4" stroke-width="1"/><path d="M59.6 82.94 H1147.3" stroke="#e4e4e4" stroke-width="1"/><path d="M59.6 58.07 H1147.3" stroke="#e4e4e4" stroke-width="1"/><path d="M59.6 33.20 H1147.3" stroke="#e4e4e4" stroke-width="1"/><path d="M65.60 33.2 V213.3" stroke="#e4e4e4" stroke-width="1"/><path d="M220.13 33.2 V213.3" stroke="#e4e4e4" stroke-width="1"/><path d="M374.66 33.2 V213.3" stroke="#e4e4e4" stroke-width="1"/><path d="M529.19 33.2 V213.3" stroke="#e4e4e4" stroke-width="1"/><path d="M683.71 33.2 V213.3" stroke="#e4e4e4" stroke-width="1"/><path d="M838.24 33.2 V213.3" stroke="#e4e4e4" stroke-width="1"/><path d="M992.77 33.2 V213.3" stroke="#e4e4e4" stroke-width="1"/><path d="M1147.30 33.2 V213.3" stroke="#e4e4e4" stroke-width="1"/><path d="M59.6 207.30 H1147.3" stroke="#d0d0d0" stroke-width="1"/><circle cx="156.10" cy="33.20" r="3" fill="#0a223e"/><circle cx="152.30" cy="41.50" r="3" fill="#0a223e"/><circle cx="130.70" cy="58.00" r="3" fill="#0a223e"/><circle cx="135.20" cy="105.70" r="3" fill="#0a223e"/><circle cx="230.50" cy="139.00" r="3" fill="#0a223e"/><circle cx="191.00" cy="167.00" r="3" fill="#0a223e"/><circle cx="133.00" cy="181.90" r="3" fill="#0a223e"/><circle cx="233.60" cy="191.40" r="3" fill="#0a223e"/><circle cx="65.60" cy="207.30" r="3" fill="#0a223e"/><circle cx="1128.00" cy="206.70" r="3" fill="#0a223e"/><circle cx="65.60" cy="207.30" r="3.6" fill="#0a223e"/></svg>
<div class="t " style="right:1164.5px;top:1001.12px;font-size:10.8px;line-height:12.96px;color:#666;font-weight:normal;">0</div>
<div class="t " style="right:1164.5px;top:976.25px;font-size:10.8px;line-height:12.96px;color:#666;font-weight:normal;">50</div>
<div class="t " style="right:1164.5px;top:951.37px;font-size:10.8px;line-height:12.96px;color:#666;font-weight:normal;">100</div>
<div class="t " style="right:1164.5px;top:926.50px;font-size:10.8px;line-height:12.96px;color:#666;font-weight:normal;">150</div>
<div class="t " style="right:1164.5px;top:901.63px;font-size:10.8px;line-height:12.96px;color:#666;font-weight:normal;">200</div>
<div class="t " style="right:1164.5px;top:876.76px;font-size:10.8px;line-height:12.96px;color:#666;font-weight:normal;">250</div>
<div class="t " style="right:1164.5px;top:851.89px;font-size:10.8px;line-height:12.96px;color:#666;font-weight:normal;">300</div>
<div class="t " style="right:1164.5px;top:827.02px;font-size:10.8px;line-height:12.96px;color:#666;font-weight:normal;">350</div>
<div class="t " style="left:765.6px;transform:translateX(-50%);transform-origin:50% 0;top:1017.62px;font-size:10.8px;line-height:12.96px;color:#666;font-weight:normal;">0</div>
<div class="t " style="left:920.1285714285714px;transform:translateX(-50%);transform-origin:50% 0;top:1017.62px;font-size:10.8px;line-height:12.96px;color:#666;font-weight:normal;">1,000</div>
<div class="t " style="left:1074.6571428571428px;transform:translateX(-50%);transform-origin:50% 0;top:1017.62px;font-size:10.8px;line-height:12.96px;color:#666;font-weight:normal;">2,000</div>
<div class="t " style="left:1229.1857142857143px;transform:translateX(-50%);transform-origin:50% 0;top:1017.62px;font-size:10.8px;line-height:12.96px;color:#666;font-weight:normal;">3,000</div>
<div class="t " style="left:1383.7142857142858px;transform:translateX(-50%);transform-origin:50% 0;top:1017.62px;font-size:10.8px;line-height:12.96px;color:#666;font-weight:normal;">4,000</div>
<div class="t " style="left:1538.242857142857px;transform:translateX(-50%);transform-origin:50% 0;top:1017.62px;font-size:10.8px;line-height:12.96px;color:#666;font-weight:normal;">5,000</div>
<div class="t " style="left:1692.7714285714285px;transform:translateX(-50%);transform-origin:50% 0;top:1017.62px;font-size:10.8px;line-height:12.96px;color:#666;font-weight:normal;">6,000</div>
<div class="t " style="left:1847.2999999999997px;transform:translateX(-50%);transform-origin:50% 0;top:1017.62px;font-size:10.8px;line-height:12.96px;color:#666;font-weight:normal;">7,000</div>
<div class="t" style="left:725px;top:920px;font-size:10.8px;line-height:14px;color:#666;transform:translate(-50%,-50%) rotate(-90deg);transform-origin:center;">Anzahl Verkäufe</div>
</body></html>
